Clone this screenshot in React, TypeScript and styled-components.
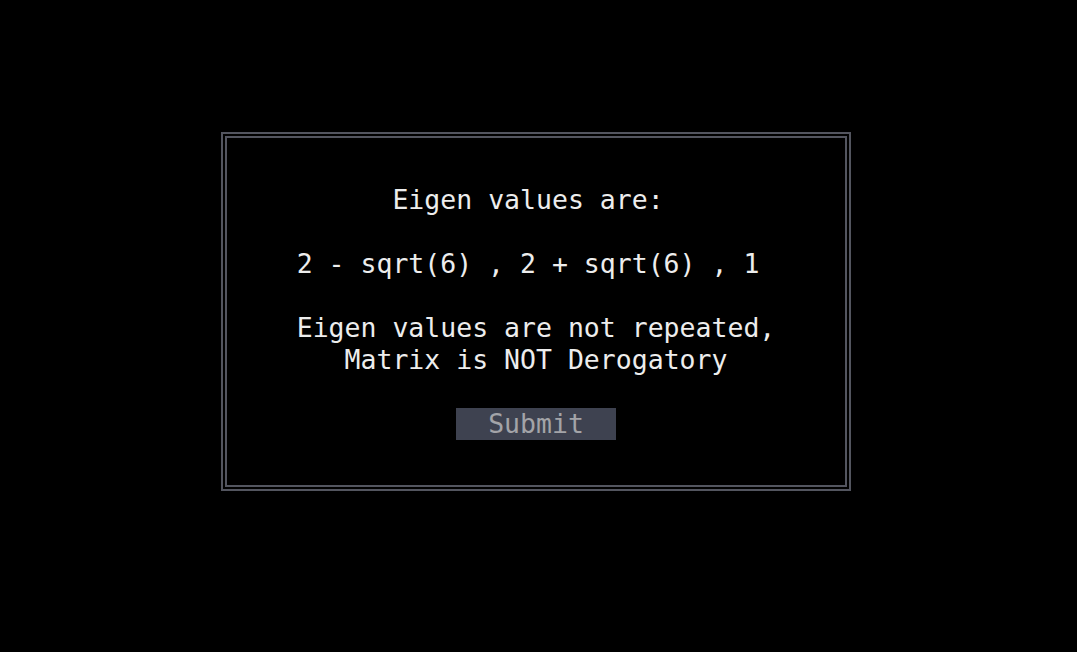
import React from "react";
import styled, { createGlobalStyle } from "styled-components";

const Global = createGlobalStyle`
  html, body { margin: 0; padding: 0; background: #000; }
  body { width: 1077px; height: 652px; overflow: hidden; }
`;

const Screen = styled.div`
  width: 1077px;
  height: 652px;
  background: #000;
  box-sizing: border-box;
  padding: 132px 0 0 221px;
  font-family: "DejaVu Sans Mono", "Liberation Mono", monospace;
  font-size: 26.5px;
  color: #ededed;
`;

const Dialog = styled.div`
  width: 630px;
  height: 359px;
  box-sizing: border-box;
  border: 6px double #53555f;
  padding: 46px 0 0 0;
  display: flex;
  flex-direction: column;
  align-items: center;
`;

const Line = styled.div<{ $gap?: boolean }>`
  height: 32px;
  line-height: 32px;
  white-space: pre;
  text-align: center;
  width: 100%;
  margin-bottom: ${(p) => (p.$gap ? "32px" : "0")};
`;

const Button = styled.button`
  all: unset;
  width: 160px;
  height: 32px;
  line-height: 32px;
  background: #3e4250;
  color: #a3a4a8;
  text-align: center;
  font-family: inherit;
  font-size: inherit;
  white-space: pre;
`;

export default function App() {
  return (
    <>
      <Global />
      <Screen>
        <Dialog>
          <Line $gap>{"Eigen values are: "}</Line>
          <Line $gap>{"2 - sqrt(6) , 2 + sqrt(6) , 1 "}</Line>
          <Line>{"Eigen values are not repeated,"}</Line>
          <Line $gap>{"Matrix is NOT Derogatory"}</Line>
          <Button>Submit</Button>
        </Dialog>
      </Screen>
    </>
  );
}
